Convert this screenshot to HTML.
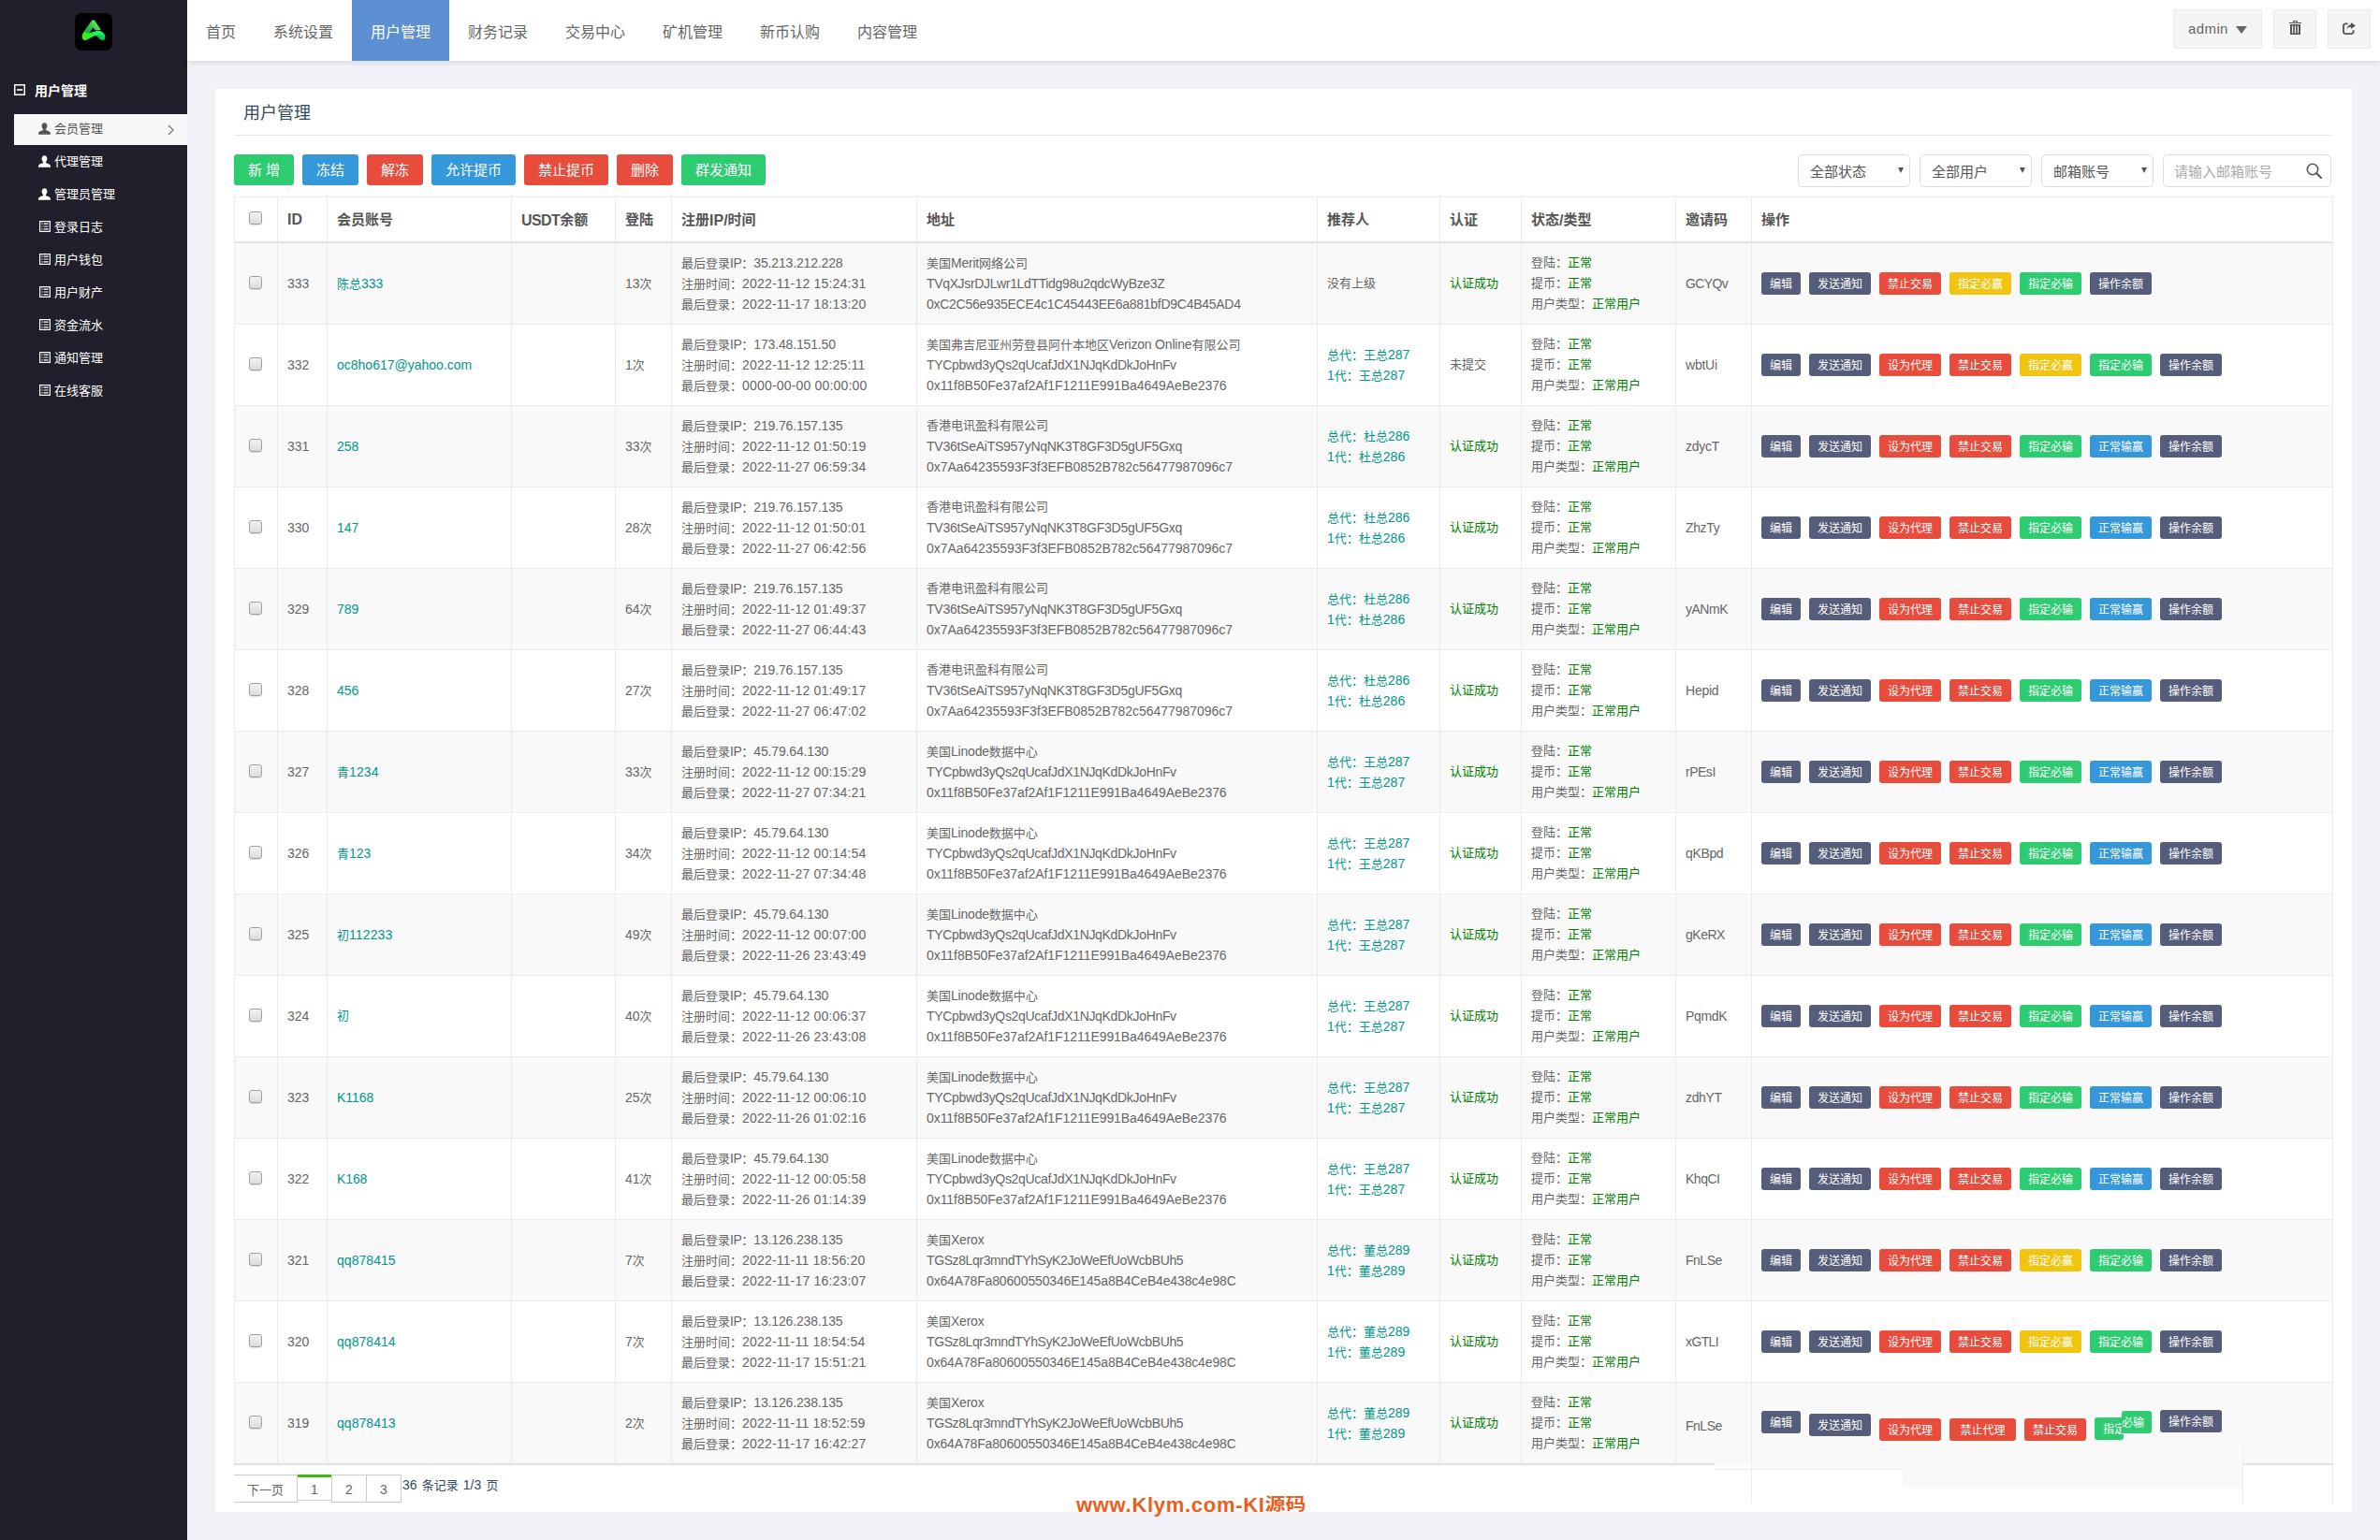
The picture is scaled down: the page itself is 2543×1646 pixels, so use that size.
<!DOCTYPE html>
<html lang="zh-CN">
<head>
<meta charset="utf-8">
<title>用户管理</title>
<style>
*{box-sizing:border-box;margin:0;padding:0}
html,body{width:2543px;height:1646px;overflow:hidden}
body{background:#f1f2f7;font-family:"Liberation Sans","Noto Sans CJK SC",sans-serif;font-size:13px;color:#666;position:relative}
a{color:#009688;text-decoration:none}
i{font-style:normal;font-size:14px}
b{font-weight:normal}
/* sidebar */
#side{position:absolute;left:0;top:0;width:200px;height:1646px;background:#211f2b;color:#fff}
#logo{position:absolute;left:80px;top:14px;width:40px;height:40px;border-radius:7px;background:#000;overflow:hidden}
#grp{position:absolute;left:0;top:80px;width:200px;height:35px;line-height:35px;font-weight:bold;font-size:14px;color:#fff}
#grp svg{position:absolute;left:15px;top:10px}
#grp span{position:absolute;left:37px;top:0}
#menu{position:absolute;left:0;top:120px;width:200px}
.si{position:relative;height:35px;line-height:36px;font-size:13px;color:#fff;white-space:nowrap}
.si .ic{position:absolute;left:41px;top:11px}
.si .il{left:42px;top:11px}
.si span{position:absolute;left:58px;top:0}
.si.act::before{content:"";position:absolute;left:15px;right:0;top:2px;height:33px;background:#f7f7f7}
.si.act{color:#555}
.si.act .ic,.si.act span,.si.act .chev{z-index:1}
.si .chev{position:absolute;left:179px;top:13px}
/* header */
#head{position:absolute;left:200px;top:0;width:2343px;height:65px;background:#fff;box-shadow:0 1px 7px rgba(40,40,60,.16)}
.ni{display:inline-block;height:65px;line-height:69px;padding:0 20px;font-size:16px;color:#666;vertical-align:top}
.ni.on{background:#5d8fd3;color:#fff}
.hb{position:absolute;top:10px;height:42px;background:#f5f5f5;border:1px solid #ececec}
/* card */
#card{position:absolute;left:230px;top:95px;width:2283px;height:1521px;background:#fff}
#title{position:absolute;left:20px;top:0;width:2243px;height:50px;border-bottom:1px solid #e7e7e7;font-size:18px;line-height:52px;padding-left:10px;color:#34495e}
.tb{position:absolute;top:70px;height:33px;line-height:34px;color:#fff;font-size:15px;text-align:center;border-radius:3px;white-space:nowrap}
.g{background:#2ecc71}.b{background:#3498db}.r{background:#e74c3c}.y{background:#f1c40f}.d{background:#565d7a}
.sel{position:absolute;top:70px;height:35px;width:120px;border:1px solid #ddd;border-radius:5px;font-size:15px;line-height:36px;padding-left:12px;color:#555;background:#fff}
.sel::after{content:"";position:absolute;right:6px;top:13px;border:3.2px solid transparent;border-top:6px solid #555;border-bottom:0;width:0;height:0}
#kw{width:180px;color:#aaa;padding-left:11px}
#kw::after{display:none}
/* table */
table{position:absolute;left:20px;top:115px;width:2243px;border-collapse:separate;border-spacing:0;table-layout:fixed;border-right:1px solid #ebebeb;border-bottom:2px solid #e2e2e2}
th,td{border-left:1px solid #ebebeb;border-top:1px solid #ebebeb;padding:0 10px;text-align:left;vertical-align:middle;overflow:visible;white-space:nowrap}
th{height:48px;font-weight:bold;color:#555;font-size:15px;padding-bottom:2px}
tbody tr:first-child td{border-top:2px solid #e4e4e4;height:88px}
td{height:87px}
tr.odd td{background:#f9f9f9}
.ln{height:22px;line-height:22px;white-space:nowrap;position:relative}
th i{font-size:16px;position:relative;top:1px}.la{top:0}.dn3{top:3px}
.ok{color:#008000}
.cb{display:block;width:14px;height:14px;margin:0 0 2px 5px;border:1px solid #a0a0a0;border-radius:3px;background:linear-gradient(#f2f2f2,#dcdcdc);box-shadow:0 1px 1px rgba(0,0,0,.12)}
.bt{display:inline-block;height:24px;line-height:26px;padding:0 9px;font-size:12px;color:#fff;border-radius:3px;margin-right:9px;vertical-align:middle}
.ops{font-size:0}
.opw{position:relative;height:24px}
.ob{position:absolute;height:24px;line-height:26px;width:66px;text-align:center;font-size:12px;color:#fff;border-radius:3px}
.ob.d:first-child{width:42px}
/* pager */
.pg{position:absolute;top:1481px;height:30px;line-height:31px;text-align:center;font-size:13px;color:#666;border:1px solid #ccc;border-left:0}
#wm{position:absolute;left:1150px;top:1595.500px;font-size:22px;font-weight:bold;color:#ec5e1c;white-space:nowrap;line-height:26px;letter-spacing:.7px}#wm span{letter-spacing:0;display:inline-block;transform:translateY(-.7px) scaleY(.83)}
</style>
</head>
<body>
<div id="side">
<div id="logo"><svg viewBox="0 0 40 40" width="40" height="40"><defs><linearGradient id="lg1" x1="0" y1="1" x2="1" y2="0.300"><stop offset="0" stop-color="#12a035"/><stop offset=".55" stop-color="#2fc050"/><stop offset="1" stop-color="#74f470"/></linearGradient><linearGradient id="lg2" x1="0" y1="0" x2="1" y2="0"><stop offset="0" stop-color="#3cf00a"/><stop offset=".45" stop-color="#22f03a"/><stop offset=".75" stop-color="#18fb6c"/><stop offset="1" stop-color="#12e070"/></linearGradient><linearGradient id="lg3" x1="0" y1="1" x2="1" y2="0"><stop offset="0" stop-color="#009a38" stop-opacity=".85"/><stop offset=".6" stop-color="#00a840" stop-opacity=".45"/><stop offset="1" stop-color="#00c050" stop-opacity="0"/></linearGradient></defs><path d="M8.600 21 L17.300 9 C18 8 18.700 7.600 19.600 7.600 C20.500 7.600 21.300 8 21.900 9 L27.900 17.900 L21.700 18.400 L19.400 15.300 L15.200 21.800 L11 23 Z" fill="url(#lg1)"/><path d="M7.700 25 C7.700 22.500 9 21 10.500 20.600 C13 21.800 15.500 21.600 18 20.500 C21 19.200 24 18.700 26.500 19 C29.500 19.400 32.500 22.500 32.400 25.500 C32.300 27.800 31.500 29 30 29 C27 29 25.500 26.500 23.500 24.600 C22.500 23.800 21.300 24 19.500 25 C16.500 26.600 14 28.200 11.500 29 C9.500 29.400 7.700 28 7.700 25 Z" fill="url(#lg2)"/><path d="M23.500 24.600 C25.500 26.500 27 29 30 29 C31.500 29 32.300 27.800 32.400 25.500 C30.500 23.500 27.500 22.300 24.500 22.800 C23.500 23 23 23.800 23.500 24.600 Z" fill="url(#lg3)"/></svg></div>
<div id="grp"><svg viewBox="0 0 12 12" width="12" height="12"><path d="M0 0h12v12H0z M1.500 1.500v9h9v-9z" fill="#fff" fill-rule="evenodd"/><path d="M3 5.200h6v1.600H3z" fill="#fff"/></svg><span>用户管理</span></div>
<div id="menu">
<div class="si act"><svg class="ic" viewBox="0 0 13 13" width="13" height="13"><path d="M6.5 0.3c1.8 0 2.9 1.4 2.9 3.3 0 1.5-0.7 2.9-1.5 3.6v0.7c1.2 0.5 4.3 1.4 4.8 2.7 0.2 0.5 0.3 1.5 0.3 2.1H0c0-0.6 0.1-1.6 0.3-2.1 0.5-1.3 3.6-2.2 4.800-2.700v-0.700C4.300 6.500 3.600 5.100 3.600 3.600 3.600 1.700 4.700 0.300 6.500 0.300z" fill="currentColor"/></svg><span>会员管理</span><svg class="chev" viewBox="0 0 7 12" width="7" height="12"><path d="M1 1l5 5-5 5" fill="none" stroke="#777" stroke-width="1.300"/></svg></div>
<div class="si"><svg class="ic" viewBox="0 0 13 13" width="13" height="13"><path d="M6.5 0.3c1.8 0 2.9 1.4 2.9 3.3 0 1.5-0.7 2.9-1.5 3.6v0.7c1.2 0.5 4.3 1.4 4.8 2.7 0.2 0.5 0.3 1.5 0.3 2.1H0c0-0.6 0.1-1.6 0.3-2.1 0.5-1.3 3.6-2.2 4.800-2.700v-0.700C4.300 6.500 3.600 5.100 3.600 3.600 3.600 1.700 4.700 0.300 6.500 0.300z" fill="currentColor"/></svg><span>代理管理</span></div>
<div class="si"><svg class="ic" viewBox="0 0 13 13" width="13" height="13"><path d="M6.5 0.3c1.8 0 2.9 1.4 2.9 3.3 0 1.5-0.7 2.9-1.5 3.6v0.7c1.2 0.5 4.3 1.4 4.8 2.7 0.2 0.5 0.3 1.5 0.3 2.1H0c0-0.6 0.1-1.6 0.3-2.1 0.5-1.3 3.6-2.2 4.800-2.700v-0.700C4.300 6.500 3.600 5.100 3.600 3.600 3.600 1.700 4.700 0.300 6.500 0.300z" fill="currentColor"/></svg><span>管理员管理</span></div>
<div class="si"><svg class="ic il" viewBox="0 0 12 12" width="12" height="12"><path d="M0 0h12v12H0z M1.200 1.200v9.600h9.600V1.200z" fill="currentColor" fill-rule="evenodd"/><path d="M2.400 2.600h1.200v1.200H2.400zM4.600 2.600h5v1.200h-5zM2.400 5.400h1.200v1.200H2.400zM4.600 5.400h5v1.200h-5zM2.400 8.200h1.200v1.200H2.400zM4.600 8.200h5v1.200h-5z" fill="currentColor"/></svg><span>登录日志</span></div>
<div class="si"><svg class="ic il" viewBox="0 0 12 12" width="12" height="12"><path d="M0 0h12v12H0z M1.200 1.200v9.600h9.600V1.200z" fill="currentColor" fill-rule="evenodd"/><path d="M2.400 2.600h1.200v1.200H2.400zM4.600 2.600h5v1.200h-5zM2.400 5.400h1.200v1.200H2.400zM4.600 5.400h5v1.200h-5zM2.400 8.200h1.200v1.200H2.400zM4.600 8.200h5v1.200h-5z" fill="currentColor"/></svg><span>用户钱包</span></div>
<div class="si"><svg class="ic il" viewBox="0 0 12 12" width="12" height="12"><path d="M0 0h12v12H0z M1.200 1.200v9.600h9.600V1.200z" fill="currentColor" fill-rule="evenodd"/><path d="M2.400 2.600h1.200v1.200H2.400zM4.600 2.600h5v1.200h-5zM2.400 5.400h1.200v1.200H2.400zM4.600 5.400h5v1.200h-5zM2.400 8.200h1.200v1.200H2.400zM4.600 8.200h5v1.200h-5z" fill="currentColor"/></svg><span>用户财产</span></div>
<div class="si"><svg class="ic il" viewBox="0 0 12 12" width="12" height="12"><path d="M0 0h12v12H0z M1.200 1.200v9.600h9.600V1.200z" fill="currentColor" fill-rule="evenodd"/><path d="M2.400 2.600h1.200v1.200H2.400zM4.600 2.600h5v1.200h-5zM2.400 5.400h1.200v1.200H2.400zM4.600 5.400h5v1.200h-5zM2.400 8.200h1.200v1.200H2.400zM4.600 8.200h5v1.200h-5z" fill="currentColor"/></svg><span>资金流水</span></div>
<div class="si"><svg class="ic il" viewBox="0 0 12 12" width="12" height="12"><path d="M0 0h12v12H0z M1.200 1.200v9.600h9.600V1.200z" fill="currentColor" fill-rule="evenodd"/><path d="M2.400 2.600h1.200v1.200H2.400zM4.600 2.600h5v1.200h-5zM2.400 5.400h1.200v1.200H2.400zM4.600 5.400h5v1.200h-5zM2.400 8.200h1.200v1.200H2.400zM4.600 8.200h5v1.200h-5z" fill="currentColor"/></svg><span>通知管理</span></div>
<div class="si"><svg class="ic il" viewBox="0 0 12 12" width="12" height="12"><path d="M0 0h12v12H0z M1.200 1.200v9.600h9.600V1.200z" fill="currentColor" fill-rule="evenodd"/><path d="M2.400 2.600h1.200v1.200H2.400zM4.600 2.600h5v1.200h-5zM2.400 5.400h1.200v1.200H2.400zM4.600 5.400h5v1.200h-5zM2.400 8.200h1.200v1.200H2.400zM4.600 8.200h5v1.200h-5z" fill="currentColor"/></svg><span>在线客服</span></div>
</div>
</div>
<div id="head"><span class="ni">首页</span><span class="ni">系统设置</span><span class="ni on">用户管理</span><span class="ni">财务记录</span><span class="ni">交易中心</span><span class="ni">矿机管理</span><span class="ni">新币认购</span><span class="ni">内容管理</span>
<div class="hb" style="left:2122px;width:95px"><span style="position:absolute;left:15px;top:0;line-height:39px;font-size:15px;letter-spacing:.4px;color:#666">admin</span><svg style="position:absolute;left:66px;top:17px" width="12" height="8" viewBox="0 0 12 8"><path d="M0 0h12L6 8z" fill="#666"/></svg></div>
<div class="hb" style="left:2229px;width:46px"><svg style="position:absolute;left:16px;top:11px" width="13" height="15" viewBox="0 0 13 16" preserveAspectRatio="none"><path d="M4.200 0h4.600v2H13v1.300H0V2h4.200zM5.300 1v1h2.400V1zM1 4.300h11V16H1zM3 5.800v8.700h1.200V5.800zM5.900 5.800v8.700h1.200V5.800zM8.800 5.800v8.700H10V5.800z" fill="#555" fill-rule="evenodd"/></svg></div>
<div class="hb" style="left:2287px;width:46px"><svg style="position:absolute;left:15px;top:13px" width="14" height="13" viewBox="0 0 15 14" preserveAspectRatio="none"><path d="M6 1.500H3.500A2.500 2.500 0 0 0 1 4v6.500A2.500 2.500 0 0 0 3.500 13H10a2.500 2.500 0 0 0 2.500-2.500V8.800" fill="none" stroke="#555" stroke-width="2"/><path d="M9.500 0L15 3.800 9.500 7.600V5.200C7.500 5.200 6 6 5 8c0-3.500 1.800-5.400 4.500-5.700z" fill="#555"/></svg></div>
</div>
<div id="card">
<div id="title">用户管理</div>
<span class="tb g" style="left:20px;width:64px">新 增</span>
<span class="tb b" style="left:93px;width:60px">冻结</span>
<span class="tb r" style="left:162px;width:60px">解冻</span>
<span class="tb b" style="left:231px;width:90px">允许提币</span>
<span class="tb r" style="left:330px;width:90px">禁止提币</span>
<span class="tb r" style="left:429px;width:60px">删除</span>
<span class="tb g" style="left:498px;width:90px">群发通知</span>
<div class="sel" style="left:1691px">全部状态</div>
<div class="sel" style="left:1821px">全部用户</div>
<div class="sel" style="left:1951px">邮箱账号</div>
<div class="sel" id="kw" style="left:2081px">请输入邮箱账号<svg style="position:absolute;left:152px;top:8px" width="17" height="17" viewBox="0 0 17 17"><circle cx="7" cy="7" r="5.700" fill="none" stroke="#555" stroke-width="1.600"/><path d="M11.200 11.200l4.800 4.800" stroke="#555" stroke-width="2" stroke-linecap="round"/></svg></div>
<table>
<colgroup><col style="width:46px"><col style="width:53px"><col style="width:197px"><col style="width:111px"><col style="width:60px"><col style="width:262px"><col style="width:428px"><col style="width:131px"><col style="width:87px"><col style="width:165px"><col style="width:81px"><col></colgroup>
<thead><tr><th class="c0"><span class="cb"></span></th><th><i>ID</i></th><th>会员账号</th><th><i style="letter-spacing:-.6px">USDT</i>余额</th><th>登陆</th><th>注册<i>IP/</i>时间</th><th>地址</th><th>推荐人</th><th>认证</th><th>状态<i>/</i>类型</th><th>邀请码</th><th>操作</th></tr></thead>
<tbody>
<tr class="odd"><td class="c0"><span class="cb"></span></td><td><div class="ln la"><i>333</i></div></td><td><div class="ln"><a>陈总<i>333</i></a></div></td><td></td><td><div class="ln"><i>13</i>次</div></td><td><div class="ln">最后登录<i style="letter-spacing:-.5px">IP</i>：<i style="letter-spacing:-.15px">35.213.212.228</i></div><div class="ln">注册时间：<i style="letter-spacing:.18px">2022-11-12 15:24:31</i></div><div class="ln">最后登录：<i style="letter-spacing:.18px">2022-11-17 18:13:20</i></div></td><td><div class="ln">美国<i style="letter-spacing:-0.23px">Merit</i>网络公司</div><div class="ln la"><i style="letter-spacing:-0.349px">TVqXJsrDJLwr1LdTTidg98u2qdcWyBze3Z</i></div><div class="ln la"><i style="letter-spacing:-0.272px">0xC2C56e935ECE4c1C45443EE6a881bfD9C4B45AD4</i></div></td><td><div class="ln">没有上级</div></td><td><div class="ln"><b class="ok">认证成功</b></div></td><td><div class="ln">登陆：<b class="ok">正常</b></div><div class="ln">提币：<b class="ok">正常</b></div><div class="ln">用户类型：<b class="ok">正常用户</b></div></td><td><div class="ln la"><i style="letter-spacing:-0.62px">GCYQv</i></div></td><td class="ops"><span class="bt d">编辑</span><span class="bt d">发送通知</span><span class="bt r">禁止交易</span><span class="bt y">指定必赢</span><span class="bt g">指定必输</span><span class="bt d">操作余额</span></td></tr>
<tr class="even"><td class="c0"><span class="cb"></span></td><td><div class="ln la"><i>332</i></div></td><td><div class="ln la"><a><i>oc8ho617@yahoo.com</i></a></div></td><td></td><td><div class="ln"><i>1</i>次</div></td><td><div class="ln">最后登录<i style="letter-spacing:-.5px">IP</i>：<i style="letter-spacing:-.15px">173.48.151.50</i></div><div class="ln">注册时间：<i style="letter-spacing:.18px">2022-11-12 12:25:11</i></div><div class="ln">最后登录：<i style="letter-spacing:.18px">0000-00-00 00:00:00</i></div></td><td><div class="ln">美国弗吉尼亚州劳登县阿什本地区<i style="letter-spacing:-0.19px">Verizon Online</i>有限公司</div><div class="ln la"><i style="letter-spacing:-0.323px">TYCpbwd3yQs2qUcafJdX1NJqKdDkJoHnFv</i></div><div class="ln la"><i style="letter-spacing:-0.065px">0x11f8B50Fe37af2Af1F1211E991Ba4649AeBe2376</i></div></td><td class="ref"><div class="ln"><a>总代：王总<i>287</i></a></div><div class="ln"><a><i>1</i>代：王总<i>287</i></a></div></td><td><div class="ln">未提交</div></td><td><div class="ln">登陆：<b class="ok">正常</b></div><div class="ln">提币：<b class="ok">正常</b></div><div class="ln">用户类型：<b class="ok">正常用户</b></div></td><td><div class="ln la"><i style="letter-spacing:-0.23px">wbtUi</i></div></td><td class="ops"><span class="bt d">编辑</span><span class="bt d">发送通知</span><span class="bt r">设为代理</span><span class="bt r">禁止交易</span><span class="bt y">指定必赢</span><span class="bt g">指定必输</span><span class="bt d">操作余额</span></td></tr>
<tr class="odd"><td class="c0"><span class="cb"></span></td><td><div class="ln la"><i>331</i></div></td><td><div class="ln la"><a><i>258</i></a></div></td><td></td><td><div class="ln"><i>33</i>次</div></td><td><div class="ln">最后登录<i style="letter-spacing:-.5px">IP</i>：<i style="letter-spacing:-.15px">219.76.157.135</i></div><div class="ln">注册时间：<i style="letter-spacing:.18px">2022-11-12 01:50:19</i></div><div class="ln">最后登录：<i style="letter-spacing:.18px">2022-11-27 06:59:34</i></div></td><td><div class="ln">香港电讯盈科有限公司</div><div class="ln la"><i style="letter-spacing:-0.253px">TV36tSeAiTS957yNqNK3T8GF3D5gUF5Gxq</i></div><div class="ln la"><i style="letter-spacing:-0.034px">0x7Aa64235593F3f3EFB0852B782c56477987096c7</i></div></td><td class="ref"><div class="ln"><a>总代：杜总<i>286</i></a></div><div class="ln"><a><i>1</i>代：杜总<i>286</i></a></div></td><td><div class="ln"><b class="ok">认证成功</b></div></td><td><div class="ln">登陆：<b class="ok">正常</b></div><div class="ln">提币：<b class="ok">正常</b></div><div class="ln">用户类型：<b class="ok">正常用户</b></div></td><td><div class="ln la"><i style="letter-spacing:-0.23px">zdycT</i></div></td><td class="ops"><span class="bt d">编辑</span><span class="bt d">发送通知</span><span class="bt r">设为代理</span><span class="bt r">禁止交易</span><span class="bt g">指定必输</span><span class="bt b">正常输赢</span><span class="bt d">操作余额</span></td></tr>
<tr class="even"><td class="c0"><span class="cb"></span></td><td><div class="ln la"><i>330</i></div></td><td><div class="ln la"><a><i>147</i></a></div></td><td></td><td><div class="ln"><i>28</i>次</div></td><td><div class="ln">最后登录<i style="letter-spacing:-.5px">IP</i>：<i style="letter-spacing:-.15px">219.76.157.135</i></div><div class="ln">注册时间：<i style="letter-spacing:.18px">2022-11-12 01:50:01</i></div><div class="ln">最后登录：<i style="letter-spacing:.18px">2022-11-27 06:42:56</i></div></td><td><div class="ln">香港电讯盈科有限公司</div><div class="ln la"><i style="letter-spacing:-0.253px">TV36tSeAiTS957yNqNK3T8GF3D5gUF5Gxq</i></div><div class="ln la"><i style="letter-spacing:-0.034px">0x7Aa64235593F3f3EFB0852B782c56477987096c7</i></div></td><td class="ref"><div class="ln"><a>总代：杜总<i>286</i></a></div><div class="ln"><a><i>1</i>代：杜总<i>286</i></a></div></td><td><div class="ln"><b class="ok">认证成功</b></div></td><td><div class="ln">登陆：<b class="ok">正常</b></div><div class="ln">提币：<b class="ok">正常</b></div><div class="ln">用户类型：<b class="ok">正常用户</b></div></td><td><div class="ln la"><i style="letter-spacing:-0.36px">ZhzTy</i></div></td><td class="ops"><span class="bt d">编辑</span><span class="bt d">发送通知</span><span class="bt r">设为代理</span><span class="bt r">禁止交易</span><span class="bt g">指定必输</span><span class="bt b">正常输赢</span><span class="bt d">操作余额</span></td></tr>
<tr class="odd"><td class="c0"><span class="cb"></span></td><td><div class="ln la"><i>329</i></div></td><td><div class="ln la"><a><i>789</i></a></div></td><td></td><td><div class="ln"><i>64</i>次</div></td><td><div class="ln">最后登录<i style="letter-spacing:-.5px">IP</i>：<i style="letter-spacing:-.15px">219.76.157.135</i></div><div class="ln">注册时间：<i style="letter-spacing:.18px">2022-11-12 01:49:37</i></div><div class="ln">最后登录：<i style="letter-spacing:.18px">2022-11-27 06:44:43</i></div></td><td><div class="ln">香港电讯盈科有限公司</div><div class="ln la"><i style="letter-spacing:-0.253px">TV36tSeAiTS957yNqNK3T8GF3D5gUF5Gxq</i></div><div class="ln la"><i style="letter-spacing:-0.034px">0x7Aa64235593F3f3EFB0852B782c56477987096c7</i></div></td><td class="ref"><div class="ln"><a>总代：杜总<i>286</i></a></div><div class="ln"><a><i>1</i>代：杜总<i>286</i></a></div></td><td><div class="ln"><b class="ok">认证成功</b></div></td><td><div class="ln">登陆：<b class="ok">正常</b></div><div class="ln">提币：<b class="ok">正常</b></div><div class="ln">用户类型：<b class="ok">正常用户</b></div></td><td><div class="ln la"><i style="letter-spacing:-0.49px">yANmK</i></div></td><td class="ops"><span class="bt d">编辑</span><span class="bt d">发送通知</span><span class="bt r">设为代理</span><span class="bt r">禁止交易</span><span class="bt g">指定必输</span><span class="bt b">正常输赢</span><span class="bt d">操作余额</span></td></tr>
<tr class="even"><td class="c0"><span class="cb"></span></td><td><div class="ln la"><i>328</i></div></td><td><div class="ln la"><a><i>456</i></a></div></td><td></td><td><div class="ln"><i>27</i>次</div></td><td><div class="ln">最后登录<i style="letter-spacing:-.5px">IP</i>：<i style="letter-spacing:-.15px">219.76.157.135</i></div><div class="ln">注册时间：<i style="letter-spacing:.18px">2022-11-12 01:49:17</i></div><div class="ln">最后登录：<i style="letter-spacing:.18px">2022-11-27 06:47:02</i></div></td><td><div class="ln">香港电讯盈科有限公司</div><div class="ln la"><i style="letter-spacing:-0.253px">TV36tSeAiTS957yNqNK3T8GF3D5gUF5Gxq</i></div><div class="ln la"><i style="letter-spacing:-0.034px">0x7Aa64235593F3f3EFB0852B782c56477987096c7</i></div></td><td class="ref"><div class="ln"><a>总代：杜总<i>286</i></a></div><div class="ln"><a><i>1</i>代：杜总<i>286</i></a></div></td><td><div class="ln"><b class="ok">认证成功</b></div></td><td><div class="ln">登陆：<b class="ok">正常</b></div><div class="ln">提币：<b class="ok">正常</b></div><div class="ln">用户类型：<b class="ok">正常用户</b></div></td><td><div class="ln la"><i style="letter-spacing:-0.23px">Hepid</i></div></td><td class="ops"><span class="bt d">编辑</span><span class="bt d">发送通知</span><span class="bt r">设为代理</span><span class="bt r">禁止交易</span><span class="bt g">指定必输</span><span class="bt b">正常输赢</span><span class="bt d">操作余额</span></td></tr>
<tr class="odd"><td class="c0"><span class="cb"></span></td><td><div class="ln la"><i>327</i></div></td><td><div class="ln"><a>青<i style="letter-spacing:0.10px">1234</i></a></div></td><td></td><td><div class="ln"><i>33</i>次</div></td><td><div class="ln">最后登录<i style="letter-spacing:-.5px">IP</i>：<i style="letter-spacing:-.15px">45.79.64.130</i></div><div class="ln">注册时间：<i style="letter-spacing:.18px">2022-11-12 00:15:29</i></div><div class="ln">最后登录：<i style="letter-spacing:.18px">2022-11-27 07:34:21</i></div></td><td><div class="ln">美国<i style="letter-spacing:-0.21px">Linode</i>数据中心</div><div class="ln la"><i style="letter-spacing:-0.323px">TYCpbwd3yQs2qUcafJdX1NJqKdDkJoHnFv</i></div><div class="ln la"><i style="letter-spacing:-0.065px">0x11f8B50Fe37af2Af1F1211E991Ba4649AeBe2376</i></div></td><td class="ref"><div class="ln"><a>总代：王总<i>287</i></a></div><div class="ln"><a><i>1</i>代：王总<i>287</i></a></div></td><td><div class="ln"><b class="ok">认证成功</b></div></td><td><div class="ln">登陆：<b class="ok">正常</b></div><div class="ln">提币：<b class="ok">正常</b></div><div class="ln">用户类型：<b class="ok">正常用户</b></div></td><td><div class="ln la"><i style="letter-spacing:-0.49px">rPEsI</i></div></td><td class="ops"><span class="bt d">编辑</span><span class="bt d">发送通知</span><span class="bt r">设为代理</span><span class="bt r">禁止交易</span><span class="bt g">指定必输</span><span class="bt b">正常输赢</span><span class="bt d">操作余额</span></td></tr>
<tr class="even"><td class="c0"><span class="cb"></span></td><td><div class="ln la"><i>326</i></div></td><td><div class="ln"><a>青<i>123</i></a></div></td><td></td><td><div class="ln"><i>34</i>次</div></td><td><div class="ln">最后登录<i style="letter-spacing:-.5px">IP</i>：<i style="letter-spacing:-.15px">45.79.64.130</i></div><div class="ln">注册时间：<i style="letter-spacing:.18px">2022-11-12 00:14:54</i></div><div class="ln">最后登录：<i style="letter-spacing:.18px">2022-11-27 07:34:48</i></div></td><td><div class="ln">美国<i style="letter-spacing:-0.21px">Linode</i>数据中心</div><div class="ln la"><i style="letter-spacing:-0.323px">TYCpbwd3yQs2qUcafJdX1NJqKdDkJoHnFv</i></div><div class="ln la"><i style="letter-spacing:-0.065px">0x11f8B50Fe37af2Af1F1211E991Ba4649AeBe2376</i></div></td><td class="ref"><div class="ln"><a>总代：王总<i>287</i></a></div><div class="ln"><a><i>1</i>代：王总<i>287</i></a></div></td><td><div class="ln"><b class="ok">认证成功</b></div></td><td><div class="ln">登陆：<b class="ok">正常</b></div><div class="ln">提币：<b class="ok">正常</b></div><div class="ln">用户类型：<b class="ok">正常用户</b></div></td><td><div class="ln la"><i style="letter-spacing:-0.36px">qKBpd</i></div></td><td class="ops"><span class="bt d">编辑</span><span class="bt d">发送通知</span><span class="bt r">设为代理</span><span class="bt r">禁止交易</span><span class="bt g">指定必输</span><span class="bt b">正常输赢</span><span class="bt d">操作余额</span></td></tr>
<tr class="odd"><td class="c0"><span class="cb"></span></td><td><div class="ln la"><i>325</i></div></td><td><div class="ln"><a>初<i style="letter-spacing:0.10px">112233</i></a></div></td><td></td><td><div class="ln"><i>49</i>次</div></td><td><div class="ln">最后登录<i style="letter-spacing:-.5px">IP</i>：<i style="letter-spacing:-.15px">45.79.64.130</i></div><div class="ln">注册时间：<i style="letter-spacing:.18px">2022-11-12 00:07:00</i></div><div class="ln">最后登录：<i style="letter-spacing:.18px">2022-11-26 23:43:49</i></div></td><td><div class="ln">美国<i style="letter-spacing:-0.21px">Linode</i>数据中心</div><div class="ln la"><i style="letter-spacing:-0.323px">TYCpbwd3yQs2qUcafJdX1NJqKdDkJoHnFv</i></div><div class="ln la"><i style="letter-spacing:-0.065px">0x11f8B50Fe37af2Af1F1211E991Ba4649AeBe2376</i></div></td><td class="ref"><div class="ln"><a>总代：王总<i>287</i></a></div><div class="ln"><a><i>1</i>代：王总<i>287</i></a></div></td><td><div class="ln"><b class="ok">认证成功</b></div></td><td><div class="ln">登陆：<b class="ok">正常</b></div><div class="ln">提币：<b class="ok">正常</b></div><div class="ln">用户类型：<b class="ok">正常用户</b></div></td><td><div class="ln la"><i style="letter-spacing:-0.49px">gKeRX</i></div></td><td class="ops"><span class="bt d">编辑</span><span class="bt d">发送通知</span><span class="bt r">设为代理</span><span class="bt r">禁止交易</span><span class="bt g">指定必输</span><span class="bt b">正常输赢</span><span class="bt d">操作余额</span></td></tr>
<tr class="even"><td class="c0"><span class="cb"></span></td><td><div class="ln la"><i>324</i></div></td><td><div class="ln"><a>初</a></div></td><td></td><td><div class="ln"><i>40</i>次</div></td><td><div class="ln">最后登录<i style="letter-spacing:-.5px">IP</i>：<i style="letter-spacing:-.15px">45.79.64.130</i></div><div class="ln">注册时间：<i style="letter-spacing:.18px">2022-11-12 00:06:37</i></div><div class="ln">最后登录：<i style="letter-spacing:.18px">2022-11-26 23:43:08</i></div></td><td><div class="ln">美国<i style="letter-spacing:-0.21px">Linode</i>数据中心</div><div class="ln la"><i style="letter-spacing:-0.323px">TYCpbwd3yQs2qUcafJdX1NJqKdDkJoHnFv</i></div><div class="ln la"><i style="letter-spacing:-0.065px">0x11f8B50Fe37af2Af1F1211E991Ba4649AeBe2376</i></div></td><td class="ref"><div class="ln"><a>总代：王总<i>287</i></a></div><div class="ln"><a><i>1</i>代：王总<i>287</i></a></div></td><td><div class="ln"><b class="ok">认证成功</b></div></td><td><div class="ln">登陆：<b class="ok">正常</b></div><div class="ln">提币：<b class="ok">正常</b></div><div class="ln">用户类型：<b class="ok">正常用户</b></div></td><td><div class="ln la"><i style="letter-spacing:-0.36px">PqmdK</i></div></td><td class="ops"><span class="bt d">编辑</span><span class="bt d">发送通知</span><span class="bt r">设为代理</span><span class="bt r">禁止交易</span><span class="bt g">指定必输</span><span class="bt b">正常输赢</span><span class="bt d">操作余额</span></td></tr>
<tr class="odd"><td class="c0"><span class="cb"></span></td><td><div class="ln la"><i>323</i></div></td><td><div class="ln la"><a><i style="letter-spacing:-0.07px">K1168</i></a></div></td><td></td><td><div class="ln"><i>25</i>次</div></td><td><div class="ln">最后登录<i style="letter-spacing:-.5px">IP</i>：<i style="letter-spacing:-.15px">45.79.64.130</i></div><div class="ln">注册时间：<i style="letter-spacing:.18px">2022-11-12 00:06:10</i></div><div class="ln">最后登录：<i style="letter-spacing:.18px">2022-11-26 01:02:16</i></div></td><td><div class="ln">美国<i style="letter-spacing:-0.21px">Linode</i>数据中心</div><div class="ln la"><i style="letter-spacing:-0.323px">TYCpbwd3yQs2qUcafJdX1NJqKdDkJoHnFv</i></div><div class="ln la"><i style="letter-spacing:-0.065px">0x11f8B50Fe37af2Af1F1211E991Ba4649AeBe2376</i></div></td><td class="ref"><div class="ln"><a>总代：王总<i>287</i></a></div><div class="ln"><a><i>1</i>代：王总<i>287</i></a></div></td><td><div class="ln"><b class="ok">认证成功</b></div></td><td><div class="ln">登陆：<b class="ok">正常</b></div><div class="ln">提币：<b class="ok">正常</b></div><div class="ln">用户类型：<b class="ok">正常用户</b></div></td><td><div class="ln la"><i style="letter-spacing:-0.36px">zdhYT</i></div></td><td class="ops"><span class="bt d">编辑</span><span class="bt d">发送通知</span><span class="bt r">设为代理</span><span class="bt r">禁止交易</span><span class="bt g">指定必输</span><span class="bt b">正常输赢</span><span class="bt d">操作余额</span></td></tr>
<tr class="even"><td class="c0"><span class="cb"></span></td><td><div class="ln la"><i>322</i></div></td><td><div class="ln la"><a><i style="letter-spacing:-0.11px">K168</i></a></div></td><td></td><td><div class="ln"><i>41</i>次</div></td><td><div class="ln">最后登录<i style="letter-spacing:-.5px">IP</i>：<i style="letter-spacing:-.15px">45.79.64.130</i></div><div class="ln">注册时间：<i style="letter-spacing:.18px">2022-11-12 00:05:58</i></div><div class="ln">最后登录：<i style="letter-spacing:.18px">2022-11-26 01:14:39</i></div></td><td><div class="ln">美国<i style="letter-spacing:-0.21px">Linode</i>数据中心</div><div class="ln la"><i style="letter-spacing:-0.323px">TYCpbwd3yQs2qUcafJdX1NJqKdDkJoHnFv</i></div><div class="ln la"><i style="letter-spacing:-0.065px">0x11f8B50Fe37af2Af1F1211E991Ba4649AeBe2376</i></div></td><td class="ref"><div class="ln"><a>总代：王总<i>287</i></a></div><div class="ln"><a><i>1</i>代：王总<i>287</i></a></div></td><td><div class="ln"><b class="ok">认证成功</b></div></td><td><div class="ln">登陆：<b class="ok">正常</b></div><div class="ln">提币：<b class="ok">正常</b></div><div class="ln">用户类型：<b class="ok">正常用户</b></div></td><td><div class="ln la"><i style="letter-spacing:-0.49px">KhqCI</i></div></td><td class="ops"><span class="bt d">编辑</span><span class="bt d">发送通知</span><span class="bt r">设为代理</span><span class="bt r">禁止交易</span><span class="bt g">指定必输</span><span class="bt b">正常输赢</span><span class="bt d">操作余额</span></td></tr>
<tr class="odd"><td class="c0"><span class="cb"></span></td><td><div class="ln la"><i>321</i></div></td><td><div class="ln la"><a><i style="letter-spacing:0.05px">qq878415</i></a></div></td><td></td><td><div class="ln"><i>7</i>次</div></td><td><div class="ln">最后登录<i style="letter-spacing:-.5px">IP</i>：<i style="letter-spacing:-.15px">13.126.238.135</i></div><div class="ln">注册时间：<i style="letter-spacing:.18px">2022-11-11 18:56:20</i></div><div class="ln">最后登录：<i style="letter-spacing:.18px">2022-11-17 16:23:07</i></div></td><td><div class="ln">美国<i style="letter-spacing:-0.23px">Xerox</i></div><div class="ln la"><i style="letter-spacing:-0.395px">TGSz8Lqr3mndTYhSyK2JoWeEfUoWcbBUh5</i></div><div class="ln la"><i style="letter-spacing:-0.154px">0x64A78Fa80600550346E145a8B4CeB4e438c4e98C</i></div></td><td class="ref"><div class="ln"><a>总代：董总<i>289</i></a></div><div class="ln"><a><i>1</i>代：董总<i>289</i></a></div></td><td><div class="ln"><b class="ok">认证成功</b></div></td><td><div class="ln">登陆：<b class="ok">正常</b></div><div class="ln">提币：<b class="ok">正常</b></div><div class="ln">用户类型：<b class="ok">正常用户</b></div></td><td><div class="ln la"><i style="letter-spacing:-0.49px">FnLSe</i></div></td><td class="ops"><span class="bt d">编辑</span><span class="bt d">发送通知</span><span class="bt r">设为代理</span><span class="bt r">禁止交易</span><span class="bt y">指定必赢</span><span class="bt g">指定必输</span><span class="bt d">操作余额</span></td></tr>
<tr class="even"><td class="c0"><span class="cb"></span></td><td><div class="ln la"><i>320</i></div></td><td><div class="ln la"><a><i style="letter-spacing:0.05px">qq878414</i></a></div></td><td></td><td><div class="ln"><i>7</i>次</div></td><td><div class="ln">最后登录<i style="letter-spacing:-.5px">IP</i>：<i style="letter-spacing:-.15px">13.126.238.135</i></div><div class="ln">注册时间：<i style="letter-spacing:.18px">2022-11-11 18:54:54</i></div><div class="ln">最后登录：<i style="letter-spacing:.18px">2022-11-17 15:51:21</i></div></td><td><div class="ln">美国<i style="letter-spacing:-0.23px">Xerox</i></div><div class="ln la"><i style="letter-spacing:-0.395px">TGSz8Lqr3mndTYhSyK2JoWeEfUoWcbBUh5</i></div><div class="ln la"><i style="letter-spacing:-0.154px">0x64A78Fa80600550346E145a8B4CeB4e438c4e98C</i></div></td><td class="ref"><div class="ln"><a>总代：董总<i>289</i></a></div><div class="ln"><a><i>1</i>代：董总<i>289</i></a></div></td><td><div class="ln"><b class="ok">认证成功</b></div></td><td><div class="ln">登陆：<b class="ok">正常</b></div><div class="ln">提币：<b class="ok">正常</b></div><div class="ln">用户类型：<b class="ok">正常用户</b></div></td><td><div class="ln la"><i style="letter-spacing:-0.62px">xGTLI</i></div></td><td class="ops"><span class="bt d">编辑</span><span class="bt d">发送通知</span><span class="bt r">设为代理</span><span class="bt r">禁止交易</span><span class="bt y">指定必赢</span><span class="bt g">指定必输</span><span class="bt d">操作余额</span></td></tr>
<tr class="odd"><td class="c0"><span class="cb"></span></td><td><div class="ln la"><i>319</i></div></td><td><div class="ln la"><a><i style="letter-spacing:0.05px">qq878413</i></a></div></td><td></td><td><div class="ln"><i>2</i>次</div></td><td><div class="ln">最后登录<i style="letter-spacing:-.5px">IP</i>：<i style="letter-spacing:-.15px">13.126.238.135</i></div><div class="ln">注册时间：<i style="letter-spacing:.18px">2022-11-11 18:52:59</i></div><div class="ln">最后登录：<i style="letter-spacing:.18px">2022-11-17 16:42:27</i></div></td><td><div class="ln">美国<i style="letter-spacing:-0.23px">Xerox</i></div><div class="ln la"><i style="letter-spacing:-0.395px">TGSz8Lqr3mndTYhSyK2JoWeEfUoWcbBUh5</i></div><div class="ln la"><i style="letter-spacing:-0.154px">0x64A78Fa80600550346E145a8B4CeB4e438c4e98C</i></div></td><td class="ref"><div class="ln"><a>总代：董总<i>289</i></a></div><div class="ln"><a><i>1</i>代：董总<i>289</i></a></div></td><td><div class="ln"><b class="ok">认证成功</b></div></td><td><div class="ln">登陆：<b class="ok">正常</b></div><div class="ln">提币：<b class="ok">正常</b></div><div class="ln">用户类型：<b class="ok">正常用户</b></div></td><td><div class="ln la dn3"><i style="letter-spacing:-0.49px">FnLSe</i></div></td><td class="ops last"><div class="opw"><span class="ob d" style="left:0;top:-1px">编辑</span><span class="ob d" style="left:51px;top:2px">发送通知</span><span class="ob r" style="left:126px;top:7px">设为代理</span><span class="ob r" style="left:201px;top:7px;width:71px">禁止代理</span><span class="ob r" style="left:281px;top:7px">禁止交易</span><span class="ob g" style="left:356px;top:6px;width:31px;padding:0 0 0 9px;text-align:left">指定</span><span class="ob g" style="left:385px;top:-1px;width:32px;padding:0 9px 0 0;text-align:right">必输</span><span class="ob d" style="left:426px;top:-2px">操作余额</span></div></td></tr>
</tbody>
</table>
<div style="position:absolute;left:1602px;top:1469px;width:564px;height:2px;background:#f9f9f9"></div>
<div style="position:absolute;left:1642px;top:1471px;width:161px;height:5px;background:#f9f9f9"></div>
<div style="position:absolute;left:1803px;top:1471px;width:363px;height:24px;background:#f9f9f9"></div>
<div style="position:absolute;left:1602px;top:1475px;width:200px;height:1px;background:#efefef"></div>
<div style="position:absolute;left:1641px;top:1471px;width:1px;height:41px;background:#eee"></div>
<div style="position:absolute;left:2166px;top:1445px;width:1px;height:68px;background:#eee"></div>
<div style="position:absolute;left:2262px;top:1471px;width:1px;height:42px;background:#eee"></div>
<span class="pg" style="left:20px;width:68px;border-left:0">下一页</span>
<span class="pg" style="left:88px;width:37px;height:28px;border-top:3px solid #42b812;line-height:27px"><i>1</i></span>
<span class="pg" style="left:125px;width:37px;border-left:1px solid #ccc;left:124px;width:38px"><i>2</i></span>
<span class="pg" style="left:162px;width:37px"><i>3</i></span>
<span style="position:absolute;left:200px;top:1481px;line-height:22px;font-size:13px;color:#34495e;white-space:nowrap;word-spacing:1.500px"><i>36</i> 条记录 <i>1/3</i> 页</span>
</div>
<div id="wm">www.Klym.com-KI<span>源码</span></div>
</body>
</html>
